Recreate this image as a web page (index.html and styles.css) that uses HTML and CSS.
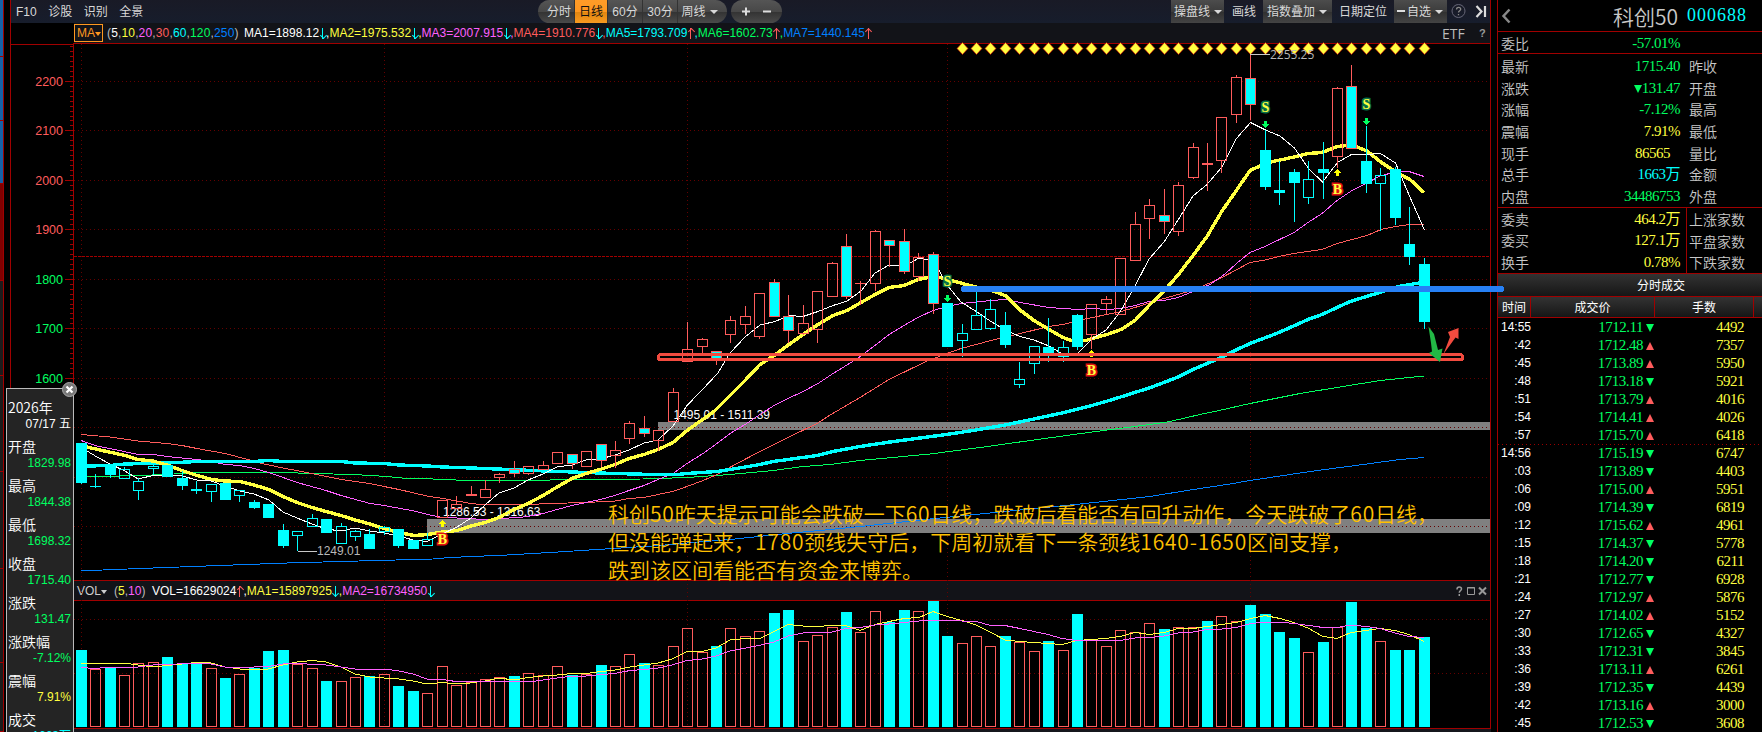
FILE: index.html
```html
<!DOCTYPE html>
<html lang="zh-CN">

<head>
    <meta charset="utf-8">
    <title>科创50 000688</title>
    <link rel="stylesheet" href="styles.css">
</head>

<body>
    <div class="app">
        <div class="edge">
            <i class="blue"></i><i class="blue"></i><i class="blue"></i>
            <i class="red"></i><i></i><i></i><i></i><i></i><i></i>
        </div>

        <div class="main">
            <!-- Toolbar -->
            <div class="toolbar">
                <div class="links">
                    <span>F10</span><span>诊股</span><span>识别</span><span>全景</span>
                </div>
                <div class="pill periods">
                    <span class="first">分时</span><span class="active">日线</span><span>60分</span><span>30分</span><span class="last">周线<b class="caret"></b></span>
                </div>
                <div class="pill zoom">
                    <svg width="51" height="23"><path d="M11 11.500h8M15 7.500v8M32 11.500h8" stroke="#ddd" stroke-width="2" /></svg>
                </div>
                <div class="tools">
                    <span class="btn t1">操盘线<b class="caret"></b></span>
                    <span class="t2">画线</span>
                    <span class="btn t3">指数叠加<b class="caret"></b></span>
                    <span class="t4">日期定位</span>
                    <span class="btn t5"><b class="dash"></b>自选<b class="caret"></b></span>
                    <svg class="t6" width="43" height="23" fill="none">
                        <circle cx="11.500" cy="11" r="6.500" stroke="#667" />
                        <path d="M9.500 9.500c0-3 4.200-2.700 4.200-.300 0 1.500-2.200 1.500-2.200 3.300M11.500 14v1.300" stroke="#888" stroke-width="1.300" />
                        <path d="M29.500 6l5 5.500-5 5.500M38 6v11" stroke="#ddd" stroke-width="2.200" />
                    </svg>
                </div>
            </div>

            <!-- MA values -->
            <div class="bar ma-bar">
                <span class="ma-name">MA<b class="caret"></b></span>
                <span class="params">(<i class="w">5</i>,<i class="y">10</i>,<i class="m">20</i>,<i class="r">30</i>,<i class="c">60</i>,<i class="g">120</i>,<i class="b">250</i>)</span>
                <span class="vals">
                    <i class="w">MA1=1898.12</i><b class="dn"></b><i class="w">,</i><i class="y">MA2=1975.532</i><b class="dn"></b><i class="y">,</i><i class="m">MA3=2007.915</i><b class="dn"></b><i class="m">,</i><i class="r">MA4=1910.776</i><b class="dn"></b><i class="r">,</i><i class="c">MA5=1793.709</i><b class="up"></b><i class="c">,</i><i class="g">MA6=1602.73</i><b class="up"></b><i class="g">,</i><i class="b">MA7=1440.145</i><b class="up"></b>
                </span>
                <span class="etf">ETF</span>
                <span class="help">?</span>
            </div>

            <svg class="chart" id="price" viewBox="10 43 1481 538" width="1481" height="538">
                <g id="grid"></g>
                <rect x="658" y="422" width="832" height="8" fill="#808080" />
                <rect x="427" y="519" width="1063" height="14" fill="#808080" />
                <path class="dots" d="M74 427.500H1490M74 526.500H1490" />
                <path class="prev-close" d="M74 256.500H1490" />
                <g class="label">
                    <text x="673.500" y="419">1495.01 - 1511.39</text>
                    <text x="443" y="516">1286.53 - 1316.63</text>
                </g>

                <!-- moving averages -->
                <g class="lines">
                    <polyline stroke="#0080ff" points="81,570.500 103,570 140,568.500 233,565 287,563 377,560.500 433,559 450,557.500 507,555 550,552.500 613,548.500 660,545.500 687,543 730,539.500 787,533.500 820,530.500 860,526.500 930,519 1000,512 1080,504 1150,496.500 1190,490 1230,484 1250,480.500 1310,471.500 1363,464.500 1400,459.500 1424,457.500" />
                    <polyline stroke="#00ff60" points="81,477 103,476.500 138,475.500 167,474.500 187,473 283,472.500 313,473.500 353,474.500 387,476.500 407,478.500 433,479 467,480.500 540,480.500 560,479.500 643,479 687,477.500 730,474.500 773,470.500 803,466.500 830,464.500 860,460.500 930,454 980,447.500 1034,440 1092,432 1150,424.500 1170,421.500 1200,414.500 1217,411 1250,403.500 1270,399.500 1300,393.500 1337,387.500 1380,380.500 1424,376" />
                    <polyline stroke="#ff5c5c" points="81,434.500 110,437 138,441 167,443.500 182,445.500 197,448.500 225,453.500 248,459.500 262,463.500 283,468 312,473.500 341,479.500 370,483.500 384,486.500 399,489.500 427,496 443,498.500 471,503.500 485,505 528,504.500 550,503.500 586,502.500 615,501 629,498.500 644,497.500 658,494.500 673,491.500 687,486.500 703,480.500 717,474.500 737,463.500 760,451.500 788,437.500 817,423.500 831,414.500 860,397.500 889,379.500 926,361.500 947,353.500 961,348.500 991,340.500 1012,335.500 1049,326.500 1063,324.500 1083,319.500 1121,311.500 1135,307.500 1149,303 1164,298.500 1187,292 1204,285.500 1221,278 1237,269.500 1250,262.500 1265,260 1279,256.500 1293,253.500 1322,249.500 1337,243.500 1367,235.500 1381,229.500 1395,226.500 1410,224.500 1424,224.500" />
                    <polyline stroke="#ff60ff" points="81,440.500 97,446 110,448.500 138,454.500 153,454.500 167,456.500 197,459.500 212,461.500 225,464.500 240,465.500 254,468.500 269,472.500 283,477.500 297,482.500 326,490.500 341,495.500 370,503.500 384,505.500 414,511 428,514.500 440,517 457,518 485,519.500 499,518.500 520,517.500 533,515.500 543,513.500 557,509.500 572,505.500 586,502.500 600,499.500 615,495.500 629,490.500 644,485.500 658,479.500 673,473.500 687,463.500 703,453.500 717,443.500 730,433.500 745,424.500 760,414.500 774,405.500 788,398.500 803,391.500 818,383.500 833,373.500 847,365 861,356 875,345.500 889,334.500 904,325.500 918,317.500 933,310.500 947,306.500 961,303.500 991,300.500 1006,299.500 1020,302.500 1049,307.500 1078,309.500 1092,308.500 1107,309.500 1121,308.500 1135,305.500 1149,301.500 1164,300.500 1178,297.500 1193,291.500 1210,284.500 1225,274 1237,263 1250,252.500 1265,246.500 1294,232.500 1308,222.500 1322,213.500 1337,200.500 1352,190.500 1367,183 1380,176 1395,172 1409,171.500 1424,176.500" />
                    <polyline class="thick" stroke="#00ffff" points="81,467 87,466 110,465.500 125,464 167,463 197,461.500 254,461.500 269,460.500 283,461.500 341,461.500 355,463 384,463.500 399,465 428,466 443,467 485,468.500 533,470.500 586,472.500 615,473.500 653,474.500 677,474.500 687,473.500 717,471.500 730,469.500 760,464.500 773,461.500 788,459.500 817,455.500 833,451.500 860,446.500 890,442 920,438 950,434 976,430 1005,425 1034,419 1062,413 1090,406 1111,400 1149,388 1164,382.500 1178,377 1193,369.500 1221,357.500 1237,349.500 1250,343.500 1279,332.500 1308,319.500 1322,314.500 1350,301.500 1383,291.500 1398,286.500 1419,283 1424,283" />
                    <polyline class="thick" stroke="#ffff40" points="81,445 87,447 100,450 125,455.500 138,459.500 153,461 167,465 182,470.500 197,475.500 212,479.500 225,481 240,481.500 254,485 269,489.500 283,496.500 297,502.500 312,507.500 326,511.500 341,515.500 355,520 370,524 384,528.500 399,532.500 414,535.500 428,534.500 442,532 457,530.500 471,526 485,522.500 499,517.500 514,509.500 528,503.500 543,495.500 557,487 572,478.500 586,473.500 600,469.500 615,464.500 629,458.500 644,454.500 658,449.500 673,442.500 687,430.500 714,411.500 730,395.500 745,380.500 760,364.500 775,355 789,344.500 803,334.500 818,324.500 833,315.500 847,310.500 861,302.500 875,294.500 889,287.500 904,285.500 918,279.500 928,277.500 940,277.500 955,281.500 970,285.500 995,291.500 1006,296 1020,310 1034,320.500 1049,329.500 1063,337.500 1073,341 1086,340.500 1092,338.500 1107,334.500 1121,329.500 1135,320.500 1149,305.500 1164,291 1178,275 1193,255.500 1207,236.500 1222,211 1236,191 1250,170.500 1260,166 1273,161.500 1294,157 1308,153.500 1322,152.500 1337,146.500 1347,145.500 1357,147 1367,151 1380,161.500 1395,171.500 1410,179.500 1424,192.500" />
                    <polyline stroke="#ffffff" points="81,446 87,451 97,457 110,464 125,471 138,479 153,475.500 167,475.500 182,476 197,480 211,481 225,486 240,491 254,494 269,500 283,512 297,518 312,524 326,529 341,531 355,528 370,531 384,533 399,536 413,540 427,541.500 442,534 457,527 471,518 485,505 499,493 514,488 528,480 543,474 557,467 572,465 586,460 600,459 615,455 629,450 644,443 658,440 673,426 687,405.500 702,390 718,373 730,353 745,337 760,325 775,321.500 789,315.500 803,316.500 818,311.500 833,305.500 847,301 861,291 875,273 889,265 904,265.500 912,262 918,258.500 933,260 940,272 947,285 961,302 977,312 991,321.500 1005,330 1020,336.500 1034,340 1049,346 1061,353 1077,354 1092,339 1106,330 1120,312 1135,286 1149,259 1164,242 1178,220 1193,196 1207,184.500 1222,167 1236,139 1250.500,122.500 1265.500,130 1280,136 1294.500,148 1308.500,168.500 1322.500,182 1337.500,162.500 1351.500,154.500 1366.500,154.500 1380.500,153.500 1395.500,163 1409.500,196 1424.500,230" />
                </g>
                <g id="candles" class="bars"></g>
                <g id="marks"></g>

                <g class="extreme">
                    <path d="M1250 54.500H1270M297.500 551.500H317" />
                    <text class="hi" x="1270" y="59">2255.25</text>
                    <text x="317" y="555">1249.01</text>
                </g>

                <!-- user drawings -->
                <g class="note">
                    <text x="608" y="522">科创<tspan>50</tspan>昨天提示可能会跌破一下<tspan>60</tspan>日线，跌破后看能否有回升动作，今天跌破了<tspan>60</tspan>日线，</text>
                    <text x="608" y="550">但没能弹起来，<tspan>1780</tspan>颈线失守后，下周初就看下一条颈线<tspan>1640-1650</tspan>区间支撑，</text>
                    <text x="608" y="578">跌到该区间看能否有资金来博弈。</text>
                </g>
                <rect x="658.500" y="354.500" width="804" height="5" rx="2" fill="none" stroke="#f24b3f" stroke-width="3" />
                <path d="M964 289H1501" stroke="#2680f5" stroke-width="6" stroke-linecap="round" />
                <polygon fill="#22b845" points="1428.500,326.500 1434,334 1438,350 1442.500,348.500 1440,362 1429,353 1432,351.500 1431,343" />
                <polygon fill="#f24b3f" points="1443.500,354 1450,337 1448,332 1458.500,328 1458.500,339 1455.500,337.500" />
            </svg>

            <!-- Volume -->
            <div class="bar vol-bar">
                <span class="vol-name">VOL<b class="caret"></b></span>
                <span class="params">(<i class="y">5</i>,<i class="m">10</i>)</span>
                <span class="vals">
                    <i class="w">VOL=16629024</i><b class="up"></b><i class="w">,</i><i class="y">MA1=15897925</i><b class="dn"></b><i class="y">,</i><i class="m">MA2=16734950</i><b class="dn"></b>
                </span>
                <svg class="win" width="35" height="12" fill="none" stroke="#999">
                    <path d="M2 4.500c0-3.500 4.500-3 4.500-.500 0 1.700-2.200 1.500-2.200 3.700M4.300 9v2" stroke-width="1.500" />
                    <path d="M12.500 2.500h7v7h-7zM12 3h8" />
                    <path d="M24 2.500l7 7M31 2.500l-7 7" stroke-width="2" />
                </svg>
            </div>
            <svg class="chart" id="volume" viewBox="10 601 1481 131" width="1481" height="131">
                <path class="dots" d="M74 619.500H1490M74 673.500H1490" />
                <g id="volbars" class="bars"></g>
                <g class="lines">
                    <polyline stroke="#ffff40" points="81,663.500 128,663.500 138,665 153,667 167,665.500 182,664 196,662.500 211,663 225,667 240,669 255,670 268,669 283,665 297,662 312,660.500 326,662 341,667 355,674 370,677 384,678 399,679 413,681 427,684 442,682.500 456,684 470,683 485,681 499,678 514,680 528,677.500 543,676 557,675 572,673.500 586,673.500 601,671.500 615,670 630,667 644,665 658,663 672,659 687,651.500 702,651.500 716,648 730,640 745,638.500 759,639 774,631.500 788,624.500 803,626 817,626.500 832,625.500 846,625.500 860,630.500 875,624.500 889,621.500 904,618.500 919,617.500 933,611.500 947,616.500 962,620.500 976,625 991,632.500 1005,640 1020,641.500 1034,642.500 1048,643.500 1062,644.500 1077,640.500 1091,639.500 1106,638.500 1120,636.500 1135,632.500 1150,634.500 1164,632.500 1178,628.500 1193,628.500 1207,626.500 1222,624.500 1236,622.500 1251,618.500 1265,615.500 1280,618.500 1294,622.500 1309,628.500 1323,636.500 1337,638.500 1351,632.500 1366,630.500 1380,628.500 1395,630.500 1409,634.500 1424,641.500" />
                    <polyline stroke="#ff60ff" points="81,667.500 95,668.500 110,667 138,667 153,665 167,664.500 196,663 211,664 225,667 254,667 268,666.500 283,664 297,663.500 326,665 341,667 355,669 384,669 399,671 413,674 427,679 442,679.500 456,681.500 533,681.500 543,680 572,676 586,676 601,674.500 615,673.500 630,670.500 644,669.500 658,668 672,665 687,660.500 702,659 716,656 730,651 759,645.500 774,642 788,636 803,633 832,632 846,628.500 860,627.500 875,625 889,624 904,622.500 919,621 933,620.500 947,620.500 962,621 976,621.500 991,625.500 1005,625.500 1020,628.500 1034,631.500 1048,634.500 1062,638.500 1077,640.500 1120,640.500 1135,638 1150,637.500 1164,636 1178,633 1193,632 1207,629.500 1222,629 1236,627.500 1251,623.500 1265,622 1280,622 1294,623.500 1309,625.500 1323,627.500 1337,627.500 1351,625 1366,626.500 1380,628.500 1395,633 1409,636.500 1424,637.500" />
                </g>
                <path d="M10 728.500H1491" stroke="#a00000" />
                <path d="M10 730.500H1491" stroke="#15161c" stroke-width="3" />
            </svg>
        </div>

        <!-- Quote panel -->
        <div class="side">
            <div class="title">
                <svg width="10" height="16" fill="none"><path d="M8.500 1.500L2.500 8l6 6.500" stroke="#888" stroke-width="2.500" /></svg>
                <span class="name">科创50</span><span class="code">000688</span>
            </div>
            <div class="rows one">
                <div class="row"><span>委比</span><em class="g">-57.01%</em></div>
            </div>
            <div class="rows seven">
                <div class="row"><span>最新</span><em class="g">1715.40</em><span>昨收</span></div>
                <div class="row"><span>涨跌</span><em class="g"><b class="tri down"></b>131.47</em><span>开盘</span></div>
                <div class="row"><span>涨幅</span><em class="g">-7.12%</em><span>最高</span></div>
                <div class="row"><span>震幅</span><em class="y">7.91%</em><span>最低</span></div>
                <div class="row"><span>现手</span><em class="y short">86565</em><span>量比</span></div>
                <div class="row"><span>总手</span><em class="c">1663万</em><span>金额</span></div>
                <div class="row"><span>内盘</span><em class="g">34486753</em><span>外盘</span></div>
            </div>
            <div class="rows three">
                <div class="row"><span>委卖</span><em class="y">464.2万</em><span>上涨家数</span></div>
                <div class="row"><span>委买</span><em class="y">127.1万</em><span>平盘家数</span></div>
                <div class="row"><span>换手</span><em class="y">0.78%</em><span>下跌家数</span></div>
            </div>
            <div class="sec-title">分时成交</div>
            <div class="tick head"><span>时间</span><span>成交价</span><span>手数</span><span></span></div>
            <div id="ticks"></div>
        </div>

        <!-- Floating day info -->
        <div class="info">
            <svg class="close" width="15" height="15"><circle cx="7.500" cy="7.500" r="7" fill="#777" stroke="#aaa" /><path d="M4.500 4.500l6 6M10.500 4.500l-6 6" stroke="#fff" stroke-width="2.200" /></svg>
            <dl>
                <dt>2026年</dt><dd class="w">07/17 <small>五</small></dd>
                <dt>开盘</dt><dd>1829.98</dd>
                <dt>最高</dt><dd>1844.38</dd>
                <dt>最低</dt><dd>1698.32</dd>
                <dt>收盘</dt><dd>1715.40</dd>
                <dt>涨跌</dt><dd>131.47</dd>
                <dt>涨跌幅</dt><dd>-7.12%</dd>
                <dt>震幅</dt><dd class="y">7.91%</dd>
                <dt>成交</dt><dd class="c">1663万</dd>
            </dl>
        </div>
    </div>
    <script src="script.js"></script>
</body>

</html>
```
FILE: styles.css
```css
* {
    box-sizing: border-box;
}

body {
    margin: 0;
    background: #000;
    color: #d8d8d8;
    font-family: "Liberation Sans", "Noto Sans CJK SC", sans-serif;
    font-size: 12px;
    overflow: hidden;
}

i,
em {
    font-style: normal;
}

.w { color: #fff; }
.y { color: #ffff40; }
.m { color: #ff60ff; }
.r { color: #ff5c5c; }
.c { color: #00ffff; }
.g { color: #00ff60; }
.b { color: #0080ff; }

.app {
    position: relative;
    display: flex;
    width: 1762px;
    height: 732px;
    overflow: hidden;
}

/* Strip of the window behind, on the far left */
.edge {
    width: 4px;
    margin-right: 6px;
    display: grid;
    grid-template-rows: 57px 64px 63px 97px 95px 96px 97px 94px 1fr;
    border-right: 1px solid #a00000;
}

.edge i {
    background: #1c1c1c;
    border-bottom: 1px solid #a00000;
}

.edge .blue {
    background: #1560a8;
}

.edge .red {
    background: #800000;
}

.main {
    width: 1481px;
    border-left: 1px solid #a00000;
    border-right: 1px solid #a00000;
}

/* Toolbar */
.toolbar {
    height: 23px;
    display: flex;
    line-height: 24px;
    background: linear-gradient(#191a26, #171d2c);
}

.links {
    display: flex;
    gap: 11.5px;
    width: 527px;
    padding-left: 5px;
}

.pill {
    display: flex;
    height: 23px;
    border-radius: 12px;
    overflow: hidden;
    background: linear-gradient(#555, #484848 50%, #333 52%, #4a4a4a);
}

.periods {
    width: 189px;
}

.periods span {
    width: 35px;
    text-align: center;
    border-right: 1px solid #333;
}

.periods .first {
    width: 37px;
    padding-left: 6px;
}

.periods .active {
    width: 33px;
    background: linear-gradient(#ff9c28, #ff9820 50%, #e08510 52%, #f89a20);
    color: #111;
}

.periods .last {
    width: 49px;
    border: 0;
    padding-right: 6px;
}

.zoom {
    width: 51px;
    margin-left: 4px;
}

.caret {
    display: inline-block;
    border: 4px solid transparent;
    border-top: 4px solid currentColor;
    border-bottom: 0;
    margin-left: 4px;
    vertical-align: 2px;
}

.tools {
    display: flex;
    margin-left: auto;
    white-space: nowrap;
}

.btn {
    background: linear-gradient(#4c4c4c, #3c3c3c 50%, #303030 52%, #444);
    padding-left: 3px;
}

.t1 { width: 53px; margin-right: 8px; }
.t2 { width: 31px; }
.t3 { width: 69px; margin-right: 7px; padding-left: 4px; }
.t4 { width: 55px; }
.t5 { width: 53px; }

.dash {
    display: inline-block;
    width: 8px;
    height: 2px;
    margin-right: 2px;
    background: #ddd;
    vertical-align: 4px;
}

/* Indicator bars */
.bar {
    display: flex;
    align-items: center;
    height: 20px;
    margin-left: 63px;
    background: #121318;
    color: #bbb;
    white-space: nowrap;
}

.vals {
    display: flex;
    align-items: center;
}

.ma-name {
    width: 29px;
    height: 18px;
    line-height: 17px;
    padding-left: 2px;
    border: 1px solid #ff9820;
    color: #ff9820;
}

.ma-name .caret {
    border-width: 4px 3.5px 0;
    margin-left: 0;
    vertical-align: 1px;
}

.ma-bar .params {
    width: 141px;
    padding-left: 4px;
    letter-spacing: 0.15px;
}

.up,
.dn {
    position: relative;
    width: 1px;
    height: 11px;
    margin: 0 3px 0 3px;
    color: #ff5c5c;
    background: currentColor;
}

.dn {
    color: #00ffff;
}

.up::after,
.dn::after {
    content: "";
    position: absolute;
    left: -1.5px;
    width: 4px;
    height: 4px;
    border: solid currentColor;
    border-width: 1px 0 0 1px;
    transform: rotate(45deg);
}

.up::after {
    top: 1px;
}

.dn::after {
    bottom: 1px;
    transform: rotate(225deg);
}

.etf {
    font: 14px "Open Sans", sans-serif;
    margin-left: auto;
    width: 37px;
}

.help {
    width: 11px;
    font-weight: bold;
    font-size: 11px;
    color: #999;
}

.vol-name {
    width: 37px;
    padding-left: 3px;
    color: #ccc;
}

.vol-name .caret {
    border-width: 4px 3.5px 0;
    margin-left: 0;
    vertical-align: 1px;
}

.vol-bar .params {
    width: 41px;
    padding-left: 3px;
}

.win {
    margin-left: auto;
}

/* Charts */
.chart {
    display: block;
    margin-left: -1px;
    overflow: visible;
    position: relative;
}

.chart path,
.chart rect {
    shape-rendering: crispEdges;
}

.dots {
    stroke: #640000;
    stroke-dasharray: 1 3;
}

.frame {
    stroke: #a00000;
    fill: none;
}

.prev-close {
    stroke: #a00000;
    stroke-dasharray: 3 1;
}

.lines polyline {
    fill: none;
    stroke-width: 1;
    shape-rendering: crispEdges;
}

.lines .thick {
    stroke-width: 3.4;
}

.bars rect {
    stroke-width: 1;
}

.axis {
    font-size: 12.5px;
    text-anchor: end;
}

.label {
    fill: #fff;
}

.extreme {
    fill: #b8b8b8;
    stroke: none;
}

.extreme path {
    stroke: #c8c8c8;
}

.hi {
    font-family: "Open Sans", sans-serif;
}

.note {
    fill: #ffc000;
    font-family: "Noto Sans CJK SC", sans-serif;
    font-size: 21px;
    font-weight: 350;
}

.note tspan {
    letter-spacing: 0.8px;
}

.mark {
    font: bold 14px "Liberation Serif", serif;
    text-anchor: middle;
    paint-order: stroke;
    stroke-width: 3px;
    fill: #ffff40;
}

.mark.sell {
    stroke: #087048;
}

.mark.buy {
    stroke: #e01010;
}

/* Quote panel */
.side {
    width: 265px;
    margin-left: 6px;
    border-left: 1px solid #a00000;
    font-family: "Liberation Serif", "Noto Sans CJK SC", serif;
}

.title {
    display: flex;
    align-items: center;
    height: 31px;
    padding: 0 15px 0 3px;
}

.title .name {
    margin-left: auto;
    margin-right: 9px;
    font: 350 21px/30px "Noto Sans CJK SC", sans-serif;
    color: #c8c8c8;
}

.title .code {
    font-size: 18px;
    letter-spacing: 1px;
    color: #00ffff;
}

.rows {
    display: grid;
    border-top: 1px solid #a00000;
}

.one { height: 22px; }
.seven { height: 154px; padding-top: 1px; }
.three { height: 66px; }

.row {
    display: flex;
    align-items: center;
    min-height: 0;
    line-height: 20px;
    padding-left: 3px;
}

.row span {
    font: 350 14px/20px "Noto Sans CJK SC", sans-serif;
    color: #c8c8c8;
    width: 73px;
    white-space: nowrap;
}

.row span:first-child {
    width: 40px;
}

.row em {
    width: 139px;
    text-align: right;
    font-size: 15px;
    letter-spacing: -0.5px;
}

.row em + span {
    margin-left: 6px;
    padding-left: 3px;
    line-height: 22px;
}

.three .row em + span {
    border-left: 1px solid #a00000;
    padding-left: 2px;
}

.row em.short {
    padding-right: 10px;
}

.tri {
    display: inline-block;
    border: 4px solid transparent;
}

.tri.down {
    border-top: 8px solid #00ff60;
    border-bottom: 0;
}

.tri.rise {
    border-bottom: 8px solid #ff5c5c;
    border-top: 0;
}

.sec-title,
.head {
    font-family: "Noto Sans CJK SC", sans-serif;
    color: #fff;
    background: linear-gradient(#333, #161616);
    border-top: 1px solid #a00000;
}

.sec-title {
    height: 23px;
    line-height: 21px;
    padding-left: 139px;
}

.tick {
    display: grid;
    grid-template-columns: 33px 124px 99px 8px;
    height: 18px;
    line-height: 18px;
}

.tick.head {
    height: 22px;
    line-height: 19px;
    border-bottom: 1px solid #a00000;
    text-align: center;
}

.head span {
    border-right: 1px solid #a00000;
}

.head span:last-child {
    border: 0;
}

.tick .time {
    font-family: "Liberation Sans", sans-serif;
    color: #fff;
    text-align: right;
}

.tick .px,
.tick .num {
    text-align: right;
    font-size: 15px;
    letter-spacing: -0.5px;
}

.tick .num {
    padding-right: 10px;
}

.px .tri {
    margin: 0 1px 0 3px;
}

.tick.minute {
    background: repeating-linear-gradient(90deg, #900 0 1px, transparent 1px 4px) top / 100% 1px no-repeat;
}

/* Floating day info */
.info {
    position: absolute;
    left: 6px;
    top: 388px;
    width: 68px;
    height: 344px;
    border: 1px solid #bbb;
    border-bottom: 0;
    background: #242424;
}

.close {
    position: absolute;
    right: -4px;
    top: -7px;
}

.info dl {
    margin: 9px 0 0;
    overflow: hidden;
    height: 334px;
}

.info dt {
    height: 19px;
    line-height: 19px;
    padding-left: 1px;
    font-family: "Noto Sans CJK SC", sans-serif;
    font-size: 14px;
    font-weight: 350;
    color: #fff;
}

.info dd {
    height: 20px;
    line-height: 14px;
    margin: 0;
    padding-right: 2px;
    text-align: right;
    color: #00ff60;
}

.info dd small {
    font-size: 12px;
}

.info dd.w { color: #fff; }
.info dd.y { color: #ffff40; }
.info dd.c { color: #00ffff; }
```
FILE: script.js
```js
// kind, high, top, bottom, low, volume top (screen y)
// r = red hollow, c = cyan solid, h = cyan hollow, m = cyan with red outline
// volume colour: solid when the last field is 1
var days = [
    ['c', 443, 443, 483, 484, 650, 1], ['h', 474, 486, 486, 488, 669, 0], ['c', 464, 464, 475, 478, 668, 1],
    ['h', 467, 469, 478, 478, 675, 0], ['h', 478, 481, 490, 500, 663, 0], ['h', 463, 466, 468, 475, 662, 0],
    ['c', 465, 465, 477, 477, 657, 1], ['c', 471, 478, 486, 490, 664, 1], ['c', 481, 489, 491, 494, 662, 1],
    ['h', 484, 484, 491, 502, 668, 0], ['c', 483, 483, 500, 500, 678, 1], ['h', 490, 490, 495, 502, 674, 0],
    ['c', 500, 502, 508, 509, 668, 1], ['c', 504, 504, 518, 518, 651, 1], ['c', 524, 530, 546, 548, 650, 1],
    ['h', 531, 531, 535, 551, 664, 0], ['h', 514, 518, 526, 526, 668, 0], ['c', 519, 519, 533, 533, 681, 1],
    ['h', 523, 526, 543, 543, 681, 0], ['h', 530, 531, 536, 541, 677, 0], ['c', 529, 534, 549, 549, 676, 1],
    ['h', 526, 527, 531, 535, 674, 0], ['c', 529, 529, 546, 548, 686, 1], ['c', 540, 540, 549, 549, 691, 1],
    ['h', 533, 539, 545, 545, 693, 0], ['r', 500, 500, 517, 517, 666, 0], ['r', 496, 504, 508, 508, 685, 0],
    ['r', 486, 494, 495, 495, 682, 0], ['r', 480, 489, 497, 497, 679, 0], ['r', 473, 474, 477, 483, 677, 0],
    ['m', 461, 469, 473, 477, 676, 1], ['r', 466, 466, 473, 475, 673, 0], ['r', 461, 465, 469, 469, 675, 0],
    ['r', 452, 452, 463, 463, 666, 0], ['m', 454, 454, 463, 469, 675, 1], ['r', 451, 451, 466, 466, 674, 0],
    ['m', 444, 444, 460, 467, 665, 1], ['r', 441, 450, 455, 468, 666, 0], ['r', 421, 423, 438, 444, 654, 0],
    ['m', 416, 428, 433, 437, 663, 1], ['r', 430, 430, 440, 451, 665, 0], ['r', 388, 392, 421, 421, 646, 0],
    ['r', 322, 349, 361, 361, 628, 0], ['r', 338, 339, 346, 353, 652, 0], ['m', 351, 351, 358, 365, 646, 1],
    ['r', 316, 320, 334, 343, 628, 0], ['r', 306, 316, 324, 334, 636, 0], ['r', 293, 293, 336, 339, 631, 0],
    ['m', 279, 282, 316, 316, 613, 1], ['m', 295, 316, 330, 343, 610, 1], ['r', 305, 323, 333, 335, 641, 0],
    ['r', 291, 291, 329, 343, 635, 0], ['r', 262, 263, 296, 296, 627, 0], ['m', 234, 246, 296, 299, 612, 1],
    ['r', 281, 283, 283, 305, 632, 0], ['r', 230, 231, 283, 291, 611, 0], ['m', 240, 240, 245, 267, 622, 1],
    ['m', 229, 241, 271, 274, 610, 1], ['r', 253, 257, 276, 281, 611, 0], ['m', 252, 254, 303, 314, 601, 1],
    ['c', 303, 303, 347, 347, 636, 1], ['h', 324, 333, 340, 357, 643, 0], ['h', 292, 315, 329, 329, 636, 0],
    ['h', 299, 309, 328, 330, 646, 0], ['c', 312, 325, 345, 348, 636, 1], ['h', 362, 379, 384, 388, 642, 0],
    ['h', 346, 346, 363, 374, 651, 0], ['c', 318, 347, 355, 362, 641, 1], ['h', 341, 347, 356, 362, 650, 0],
    ['c', 314, 315, 347, 350, 614, 1], ['r', 304, 304, 334, 349, 640, 0], ['r', 296, 299, 303, 315, 646, 0],
    ['r', 258, 258, 314, 314, 630, 0], ['r', 212, 224, 260, 260, 632, 0], ['r', 199, 205, 218, 239, 623, 0],
    ['m', 189, 215, 221, 234, 629, 1], ['r', 182, 185, 231, 236, 627, 0], ['r', 143, 147, 177, 179, 627, 0],
    ['r', 143, 163, 164, 191, 621, 1], ['r', 117, 117, 160, 173, 616, 0], ['r', 75, 77, 114, 123, 621, 0],
    ['m', 54, 78, 104, 120, 605, 1], ['c', 130, 150, 187, 190, 614, 1], ['c', 161, 190, 193, 205, 632, 1],
    ['c', 169, 172, 183, 222, 638, 1], ['h', 161, 179, 197, 204, 652, 0], ['c', 142, 169, 173, 199, 642, 1],
    ['r', 87, 88, 156, 168, 627, 0], ['m', 65, 86, 148, 148, 602, 1], ['c', 126, 161, 184, 193, 628, 1],
    ['h', 168, 175, 183, 231, 641, 0], ['c', 167, 169, 218, 225, 650, 1], ['c', 207, 244, 257, 265, 650, 1],
    ['c', 258, 264, 322, 329, 637, 1]
];

var RED = '#ff5c5c', CYAN = '#00ffff';

function dayX(i) {
    return 81 + Math.floor(14.4409 * i + 0.13);
}

function box(x, top, bottom, stroke, fill) {
    return '<rect x="' + (x - 4.5) + '" y="' + (top + 0.5) + '" width="10" height="' + (bottom - top) +
        '" stroke="' + stroke + '" fill="' + fill + '"/>';
}

function drawCandles() {
    var out = '', vol = '';
    days.forEach(function (d, i) {
        var x = dayX(i), cx = x + 0.5;
        var color = d[0] == 'r' || d[0] == 'm' ? RED : CYAN;
        out += '<path stroke="' + color + '" d="M' + cx + ' ' + d[1] + 'V' + d[2] + 'M' + cx + ' ' + d[3] + 'V' + d[4] + '"/>';
        if (d[3] - d[2] < 1) {
            out += '<path stroke="' + color + '" d="M' + (x - 5) + ' ' + (d[2] + 0.5) + 'H' + (x + 6) + '"/>';
        } else if (d[0] == 'c') {
            out += box(x, d[2], d[3] - 1, CYAN, CYAN);
        } else if (d[0] == 'm') {
            out += box(x, d[2], d[3], RED, CYAN);
        } else {
            out += box(x, d[2], d[3], color, 'none');
        }
        vol += d[6] ? box(x, d[5], 726, CYAN, CYAN) : box(x, d[5], 726, RED, 'none');
    });
    document.getElementById('candles').innerHTML = out;
    document.getElementById('volbars').innerHTML = vol;
}

function drawGrid() {
    var out = '<path class="frame" d="M10 44.5H74M73.5 43V581M73 43.5H1491M73 580.5H1491M73 600.5H1491"/>';
    var ticks = '', dots = '';
    for (var v = 2270; v > 1590; v -= 10) {
        var y = Math.floor(81.4 + (2200 - v) * 0.4947) + 0.5;
        ticks += 'M' + (v % 100 ? 70 : 65) + ' ' + y + 'H73';
        if (v % 100 == 0) {
            out += '<text class="axis" x="63" y="' + (y + 4.5) + '" fill="' + (v > 1850 ? RED : '#00ff60') + '">' + v + '</text>';
            dots += 'M74 ' + y + 'H1490';
        }
    }
    dots += 'M74 477.5H1490';
    [81.5, 384.5, 687.5, 947.5, 1250.5].forEach(function (x) {
        dots += 'M' + x + ' 44V727';
    });
    out += '<path class="frame" d="' + ticks + '"/><path class="dots" d="' + dots + '"/>';
    document.getElementById('grid').innerHTML = out;
}

function drawMarks() {
    var out = '';
    for (var i = 61; i < days.length; i++) {
        var x = dayX(i) + 0.5;
        out += '<polygon fill="#ffff40" stroke="#c00000" stroke-width="0.7" points="' + (x - 5.5) + ',48.5 ' + x + ',42.5 ' + (x + 5.5) + ',48.5 ' + x + ',54.500"/>';
    }
    // text y, arrow centre y
    [[947.5, 281, 298], [1265.5, 107, 124], [1366.5, 104, 121]].forEach(function (s) {
        out += '<text class="mark sell" x="' + s[0] + '" y="' + (s[1] + 5) + '">S</text>' +
            '<path fill="#00ff60" d="M' + (s[0] - 1.5) + ' ' + (s[2] - 3) + 'h3v3h2l-3.500 4l-3.500 -4h2z"/>';
    });
    [[442.5, 539, 523], [1091.5, 370, 353], [1337.5, 189, 172]].forEach(function (s) {
        out += '<text class="mark buy" x="' + s[0] + '" y="' + (s[1] + 5) + '">B</text>' +
            '<path fill="#ffff00" d="M' + (s[0] - 1.5) + ' ' + (s[2] + 4) + 'h3v-3h2l-3.500 -4l-3.500 4h2z"/>';
    });
    document.getElementById('marks').innerHTML = out;
}

// time, price, direction, lots
var trades = [
    ['14:55', '1712.11', 0, 4492], [':42', '1712.48', 1, 7357], [':45', '1713.89', 1, 5950], [':48', '1713.18', 0, 5921],
    [':51', '1713.79', 1, 4016], [':54', '1714.41', 1, 4026], [':57', '1715.70', 1, 6418], ['14:56', '1715.19', 0, 6747],
    [':03', '1713.89', 0, 4403], [':06', '1715.00', 1, 5951], [':09', '1714.39', 0, 6819], [':12', '1715.62', 1, 4961],
    [':15', '1714.37', 0, 5778], [':18', '1714.20', 0, 6211], [':21', '1712.77', 0, 6928], [':24', '1712.97', 1, 5876],
    [':27', '1714.02', 1, 5152], [':30', '1712.65', 0, 4327], [':33', '1712.31', 0, 3845], [':36', '1713.11', 1, 6261],
    [':39', '1712.35', 0, 4439], [':42', '1713.16', 1, 3000], [':45', '1712.53', 0, 3608]
];

function fillTrades() {
    document.getElementById('ticks').innerHTML = trades.map(function (t, i) {
        return '<div class="tick' + (i && t[0].length == 5 ? ' minute' : '') + '"><span class="time">' + t[0] +
            '</span><span class="px g">' + t[1] + '<b class="tri ' + (t[2] ? 'rise' : 'down') + '"></b></span>' +
            '<span class="num y">' + t[3] + '</span></div>';
    }).join('');
}

drawGrid();
drawCandles();
drawMarks();
fillTrades();
```
